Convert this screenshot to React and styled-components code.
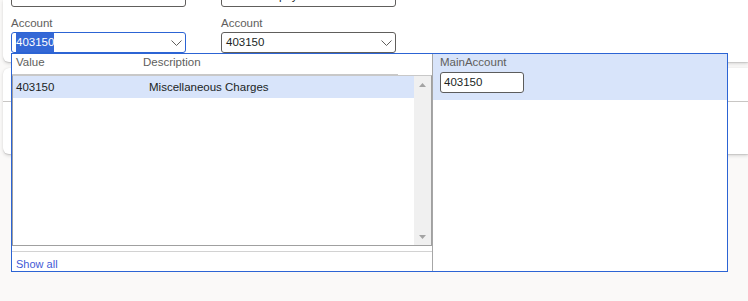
import React from 'react';
import styled, { createGlobalStyle } from 'styled-components';

const Global = createGlobalStyle`
  html, body { margin: 0; padding: 0; background: #faf9f8; }
  body {
    font-family: "Liberation Sans", Arial, sans-serif;
    font-size: 11.5px;
    color: #201f1e;
    overflow: hidden;
  }
`;

const Page = styled.div`
  position: relative;
  width: 748px;
  height: 301px;
  overflow: hidden;
  padding-left: 3px;
  box-sizing: border-box;
  display: flex;
  flex-direction: column;
  gap: 6px;
`;

const Card = styled.div`
  flex: none;
  background: #fff;
  height: ${p => p.$h}px;
  overflow: hidden;
  border-radius: ${p => (p.$first ? '0 0 0 6px' : '6px 0 0 6px')};
  box-shadow: 0 1.6px 3.6px rgba(0, 0, 0, 0.13), 0 0.3px 0.9px rgba(0, 0, 0, 0.11);
`;

const CardHeader = styled.div`
  height: 33px;
  border-bottom: 1px solid #c8c6c4;
`;

const FieldGrid = styled.div`
  display: grid;
  grid-template-columns: 175px 175px;
  column-gap: 35px;
  row-gap: 8px;
  padding-left: 8px;
  margin-top: -14px;
`;

const Field = styled.div`
  display: flex;
  flex-direction: column;
  gap: 1px;
`;

const Label = styled.div`
  line-height: 16px;
  color: #605e5c;
`;

const Select = styled.div`
  box-sizing: border-box;
  height: 21px;
  width: 100%;
  border: 1px solid ${p => (p.$focused ? '#2c64d4' : '#605e5c')};
  border-radius: 3px;
  background: #fff;
  display: flex;
  align-items: center;
  justify-content: space-between;
  padding: 0 3px 0 4px;
  line-height: 19px;
  white-space: nowrap;
`;

const Highlight = styled.span`
  background: #3468d6;
  color: #fff;
`;

const Chevron = () => (
  <svg width="11" height="6" viewBox="0 0 11 6" style={{ flex: 'none' }}>
    <polyline points="0.5,0.5 5.5,5.5 10.5,0.5" fill="none" stroke="#605e5c" strokeWidth="1" />
  </svg>
);

const Dropdown = styled.div`
  position: absolute;
  left: 11px;
  top: 53px;
  width: 717px;
  height: 219px;
  box-sizing: border-box;
  border: 1px solid #2c64d4;
  background: #fff;
  display: grid;
  grid-template-columns: 421px 1fr;
`;

const LeftPane = styled.div`
  display: flex;
  flex-direction: column;
  border-right: 1px solid #a6a6a6;
  min-height: 0;
`;

const HeaderRow = styled.div`
  width: 386px;
  height: 20px;
  border-bottom: 1px solid #c8c8c8;
  display: grid;
  grid-template-columns: 127px 1fr;
  line-height: 17px;
  color: #605e5c;
  & > span { padding-left: 4px; }
`;

const ListBox = styled.div`
  box-sizing: border-box;
  height: 171px;
  border: 1px solid #a0a0a0;
  border-top-color: #c8c8c8;
  display: flex;
`;

const Rows = styled.div`
  flex: 1;
`;

const Row = styled.div`
  height: 22px;
  line-height: 22px;
  display: grid;
  grid-template-columns: 133px 1fr;
  background: ${p => (p.$selected ? '#d8e4fa' : 'transparent')};
  & > span { padding-left: 3px; }
`;

const ScrollBar = styled.div`
  width: 17px;
  flex: none;
  background: #f0f0f0;
  display: flex;
  flex-direction: column;
  justify-content: space-between;
`;

const ScrollButton = styled.div`
  height: 17px;
  display: flex;
  align-items: center;
  justify-content: center;
`;

const Arrow = ({ down }) => (
  <svg width="7" height="4" viewBox="0 0 7 4">
    <polygon points={down ? '0,0 7,0 3.5,4' : '0,4 7,4 3.5,0'} fill="#a3a3a3" />
  </svg>
);

const Footer = styled.div`
  margin-top: 5px;
  border-top: 1px solid #d2d2d2;
  height: 19px;
  box-sizing: border-box;
  padding: 3px 0 0 4px;
  line-height: 19px;
  overflow: hidden;
`;

const Link = styled.a`
  color: #3f5ad6;
  font-size: 11px;
  text-decoration: none;
`;

const RightPane = styled.div`
  display: flex;
  flex-direction: column;
`;

const Preview = styled.div`
  background: #d8e4fa;
  padding: 0 7px 7px;
`;

const PreviewLabel = styled.div`
  height: 18px;
  line-height: 17px;
  color: #605e5c;
`;

const PreviewInput = styled.div`
  box-sizing: border-box;
  width: 84px;
  height: 21px;
  border: 1px solid #5c5c5c;
  border-radius: 3px;
  background: #fff;
  padding-left: 3px;
  line-height: 19px;
`;

export default function App() {
  return (
    <>
      <Global />
      <Page>
        <Card $first $h={62}>
          <FieldGrid>
            <Field>
              <Select>
                <span>Order fee</span>
                <Chevron />
              </Select>
            </Field>
            <Field>
              <Select>
                <span>Customer payment</span>
                <Chevron />
              </Select>
            </Field>
            <Field>
              <Label>Account</Label>
              <Select $focused>
                <Highlight>403150</Highlight>
                <Chevron />
              </Select>
            </Field>
            <Field>
              <Label>Account</Label>
              <Select>
                <span>403150</span>
                <Chevron />
              </Select>
            </Field>
          </FieldGrid>
        </Card>
        <Card $h={86}>
          <CardHeader />
        </Card>

        <Dropdown>
          <LeftPane>
            <HeaderRow>
              <span>Value</span>
              <span>Description</span>
            </HeaderRow>
            <ListBox>
              <Rows>
                <Row $selected>
                  <span>403150</span>
                  <span>Miscellaneous Charges</span>
                </Row>
              </Rows>
              <ScrollBar>
                <ScrollButton><Arrow /></ScrollButton>
                <ScrollButton><Arrow down /></ScrollButton>
              </ScrollBar>
            </ListBox>
            <Footer>
              <Link href="#">Show all</Link>
            </Footer>
          </LeftPane>
          <RightPane>
            <Preview>
              <PreviewLabel>MainAccount</PreviewLabel>
              <PreviewInput>403150</PreviewInput>
            </Preview>
          </RightPane>
        </Dropdown>
      </Page>
    </>
  );
}
